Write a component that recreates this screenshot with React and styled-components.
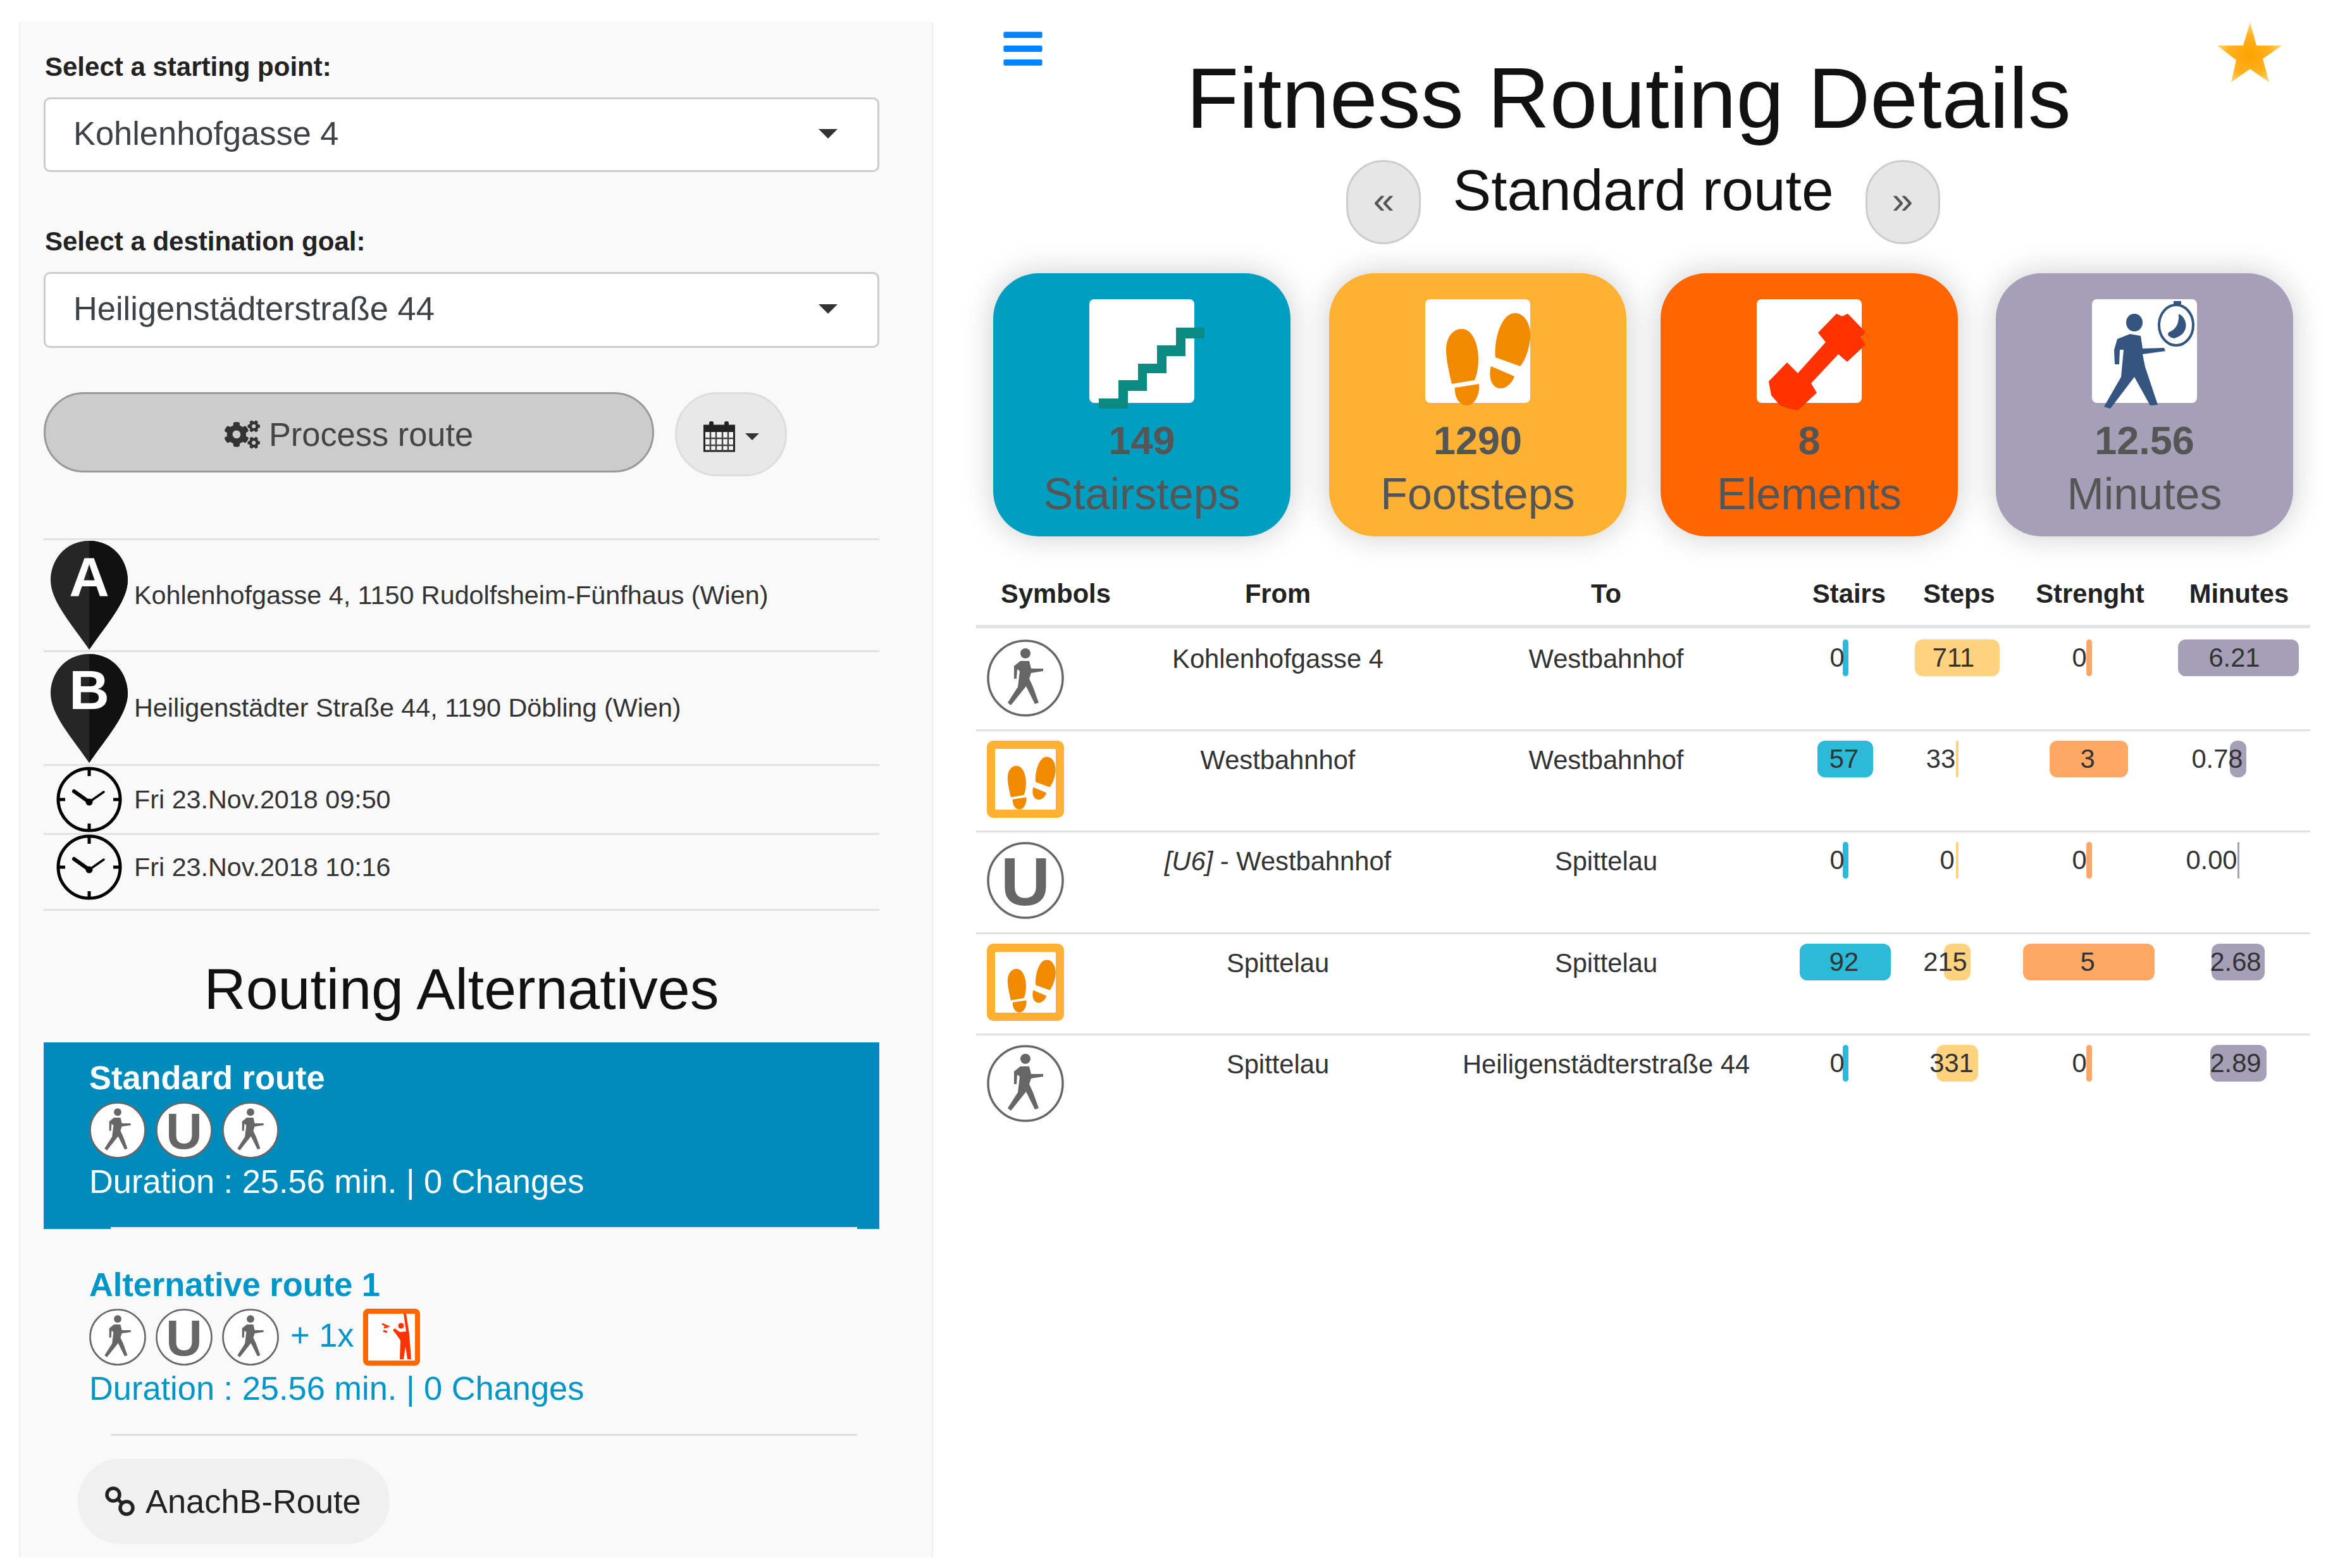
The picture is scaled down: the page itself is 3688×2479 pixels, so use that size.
import React from 'react'
import styled, { createGlobalStyle } from 'styled-components'
import { FaBars, FaCogs } from 'react-icons/fa'

const GlobalStyle = createGlobalStyle`
  html, body {
    margin: 0;
    background: #fff;
    font-family: "Liberation Sans", Arial, sans-serif;
    color: #333;
  }
`

const Page = styled.div`
  display: flex;
  align-items: flex-start;
  width: 3688px;
  height: 2479px;
  overflow: hidden;
`

const Sidebar = styled.aside`
  box-sizing: border-box;
  flex: none;
  width: 1445px;
  height: 2427px;
  margin: 35px 0 0 30px;
  padding: 46px 83px 0 37px;
  background: #f9f9f9;
  border-left: 2px solid #eee;
  border-right: 2px solid #eee;
`

const FieldLabel = styled.label`
  display: block;
  margin-top: ${p => p.$top}px;
  padding-left: 2px;
  font-size: 42px;
  font-weight: bold;
  line-height: 50px;
  color: #222;
`

const SelectBox = styled.div`
  box-sizing: border-box;
  display: flex;
  align-items: center;
  justify-content: space-between;
  height: ${p => p.$height}px;
  margin-top: 23px;
  padding: 0 63px 4px 44px;
  background: #fff;
  border: 3px solid #ccc;
  border-radius: 10px;
  font-size: 52.4px;
  color: #3c4248;
`

const Caret = styled.i`
  width: 0;
  height: 0;
  border-left: ${p => p.$size}px solid transparent;
  border-right: ${p => p.$size}px solid transparent;
  border-top: ${p => p.$size}px solid #333;
`

const ButtonRow = styled.div`
  display: flex;
  gap: 33px;
  margin-top: 70px;
`

const ProcessButton = styled.button`
  box-sizing: border-box;
  display: flex;
  align-items: center;
  justify-content: center;
  gap: 14px;
  width: 965px;
  height: 127px;
  padding-top: 8px;
  background: #ccc;
  border: 3px solid #999;
  border-radius: 64px;
  font-family: inherit;
  font-size: 52.4px;
  color: #444;
`

const CalendarButton = styled.button`
  box-sizing: border-box;
  display: flex;
  align-items: center;
  justify-content: center;
  gap: 16px;
  width: 177px;
  height: 133px;
  padding-top: 8px;
  background: #e8e8e8;
  border: 3px solid #ddd;
  border-radius: 67px;
  color: #333;
`

const SummaryList = styled.div`
  margin-top: 98px;
  border-bottom: 3px solid #e2e2e2;
`

const SummaryRow = styled.div`
  box-sizing: border-box;
  display: flex;
  align-items: center;
  height: ${p => p.$height}px;
  padding-bottom: ${p => p.$bottom || 0}px;
  border-top: 3px solid #e2e2e2;
  font-size: 41.3px;
  color: #333;
`

const IconSlot = styled.div`
  display: flex;
  justify-content: center;
  flex: none;
  width: 143px;
`

const SideTitle = styled.h3`
  margin: 68px 0 30px;
  font-size: 91.5px;
  font-weight: normal;
  line-height: 110px;
  text-align: center;
  color: #111;
`

const RouteItem = styled.div`
  position: relative;
  box-sizing: border-box;
  height: ${p => p.$height}px;
  padding: ${p => p.$top}px 0 0 72px;
  background: ${p => (p.$active ? '#008bbd' : 'transparent')};
  color: ${p => (p.$active ? '#fff' : '#0096c7')};

  &::after {
    content: '';
    position: absolute;
    left: 106px;
    right: 35px;
    bottom: 0;
    height: 3px;
    background: ${p => (p.$active ? '#f2f2f2' : '#ddd')};
  }
`

const RouteName = styled.div`
  font-size: 52.4px;
  font-weight: bold;
  line-height: 60px;
`

const RouteIcons = styled.div`
  display: flex;
  align-items: center;
  gap: 15px;
  height: 90px;
  margin-top: 8px;
`

const Extra = styled.span`
  margin: 0 0 6px 3px;
  font-size: 52.4px;
`

const RouteInfo = styled.div`
  margin-top: 6px;
  font-size: 52.4px;
  line-height: 60px;
`

const LinkButton = styled.button`
  display: flex;
  align-items: center;
  gap: 16px;
  width: 493px;
  height: 135px;
  margin: 36px 0 0 54px;
  padding: 0 0 0 43px;
  background: #f0f0f0;
  border: none;
  border-radius: 68px;
  font-family: inherit;
  font-size: 52.4px;
  color: #222;
`

const Main = styled.main`
  box-sizing: border-box;
  flex: 1;
  padding-right: 14px;
`

const Header = styled.header`
  display: grid;
  grid-template-columns: 1fr auto 1fr;
  padding-top: 35px;
`

const MenuIcon = styled(FaBars)`
  margin: 7px 0 0 107px;
  font-size: 70px;
  color: #0084ff;
`

const Star = styled.svg`
  justify-self: end;
  margin-right: 67px;
`

const Title = styled.h1`
  margin: 45px 0 0;
  font-size: 136px;
  font-weight: normal;
  line-height: 150px;
  color: #111;
`

const RouteNav = styled.div`
  display: flex;
  justify-content: center;
  gap: 50px;
  margin: 16px 0 0 46px;
  height: 140px;
`

const RoundButton = styled.button`
  box-sizing: border-box;
  width: 118px;
  height: 133px;
  margin-top: 7px;
  padding: 0 0 6px;
  background: #e6e6e6;
  border: 3px solid #ccc;
  border-radius: 60px;
  font-family: inherit;
  font-size: 60px;
  color: #555;
`

const RouteTitle = styled.h3`
  margin: 0;
  font-size: 91px;
  font-weight: normal;
  line-height: 110px;
  color: #111;
`

const Cards = styled.section`
  display: grid;
  grid-template-columns: 531px 524px 530px 467px;
  margin: 46px 0 0 95px;
`

const Card = styled.div`
  display: flex;
  flex-direction: column;
  align-items: center;
  box-sizing: border-box;
  width: 470px;
  height: 416px;
  padding-top: 41px;
  background: ${p => p.$color};
  border-radius: 72px;
  box-shadow: 0 0 50px rgba(0, 0, 0, 0.2);
  color: #555;
`

const CardTile = styled.div`
  width: 166px;
  height: 164px;
  background: #fff;
  border-radius: 8px;

  svg {
    display: block;
    overflow: visible;
  }
`

const CardValue = styled.div`
  margin-top: 21px;
  font-size: 63px;
  font-weight: bold;
  line-height: 76px;
`

const CardLabel = styled.div`
  margin-top: 5px;
  font-size: 70px;
  line-height: 84px;
`

const Table = styled.table`
  width: 2109px;
  margin: 42px 0 0 68px;
  border-collapse: collapse;
  table-layout: fixed;
  font-size: 41.7px;
  color: #333;
`

const HeadCell = styled.th`
  height: 98px;
  padding: 0;
  border-bottom: 5px solid #dee2e6;
  color: #222;
`

const Row = styled.tr`
  border-bottom: ${p => (p.$last ? 'none' : '3px solid #e2e2e2')};
`

const Cell = styled.td`
  box-sizing: border-box;
  height: ${p => p.$height}px;
  padding: ${p => p.$top}px ${p => p.$right || 0}px 0 0;
  line-height: 58px;
  text-align: center;
  vertical-align: top;
`

const SymbolCell = styled(Cell)`
  padding-left: 17px;
  text-align: left;
`

const Gauge = styled.div`
  display: grid;
  justify-items: center;
  align-items: center;
  height: 58px;
`

const GaugeBar = styled.div`
  grid-area: 1 / 1;
  width: ${p => p.$width}px;
  height: 58px;
  background: ${p => p.$color};
  border-radius: ${p => Math.min(12, p.$width / 2)}px;
`

const GaugeText = styled.span`
  grid-area: 1 / 1;
  position: relative;
  transform: translateX(${p => p.$shift}px);
`

const fontStack = '"Liberation Sans", Arial, sans-serif'

const Pin = ({ letter }) => (
  <svg width="122" height="172" viewBox="0 0 122 172">
    <path d="M61 0C100 0 122 32 122 62C122 95 90 130 61 172C32 130 0 95 0 62C0 32 22 0 61 0Z" fill="#262626" />
    <path d="M61 0C100 0 122 32 122 62C122 95 90 130 61 172Z" fill="#111" />
    <text x="61" y="87" textAnchor="middle" fontFamily={fontStack} fontWeight="bold" fontSize="88" fill="#fff">
      {letter}
    </text>
  </svg>
)

const ClockIcon = () => (
  <svg width="106" height="105" viewBox="0 0 106 105">
    <circle cx="53" cy="52" r="49" fill="none" stroke="#000" strokeWidth="5" />
    <path d="M53 4v11M53 90v11M4 52h11M91 52h11" stroke="#000" strokeWidth="5" />
    <path d="M29 39L53 56" fill="none" stroke="#000" strokeWidth="6" strokeLinecap="round" />
    <path d="M53 56L76 40" fill="none" stroke="#000" strokeWidth="3.5" strokeLinecap="round" />
    <circle cx="53" cy="56" r="5.5" fill="#000" />
  </svg>
)

const WalkerRing = ({ size }) => (
  <svg width={size} height={size} viewBox="0 0 122 122">
    <circle cx="61" cy="61" r="59" fill="#fff" stroke="#666" strokeWidth="3.5" />
    <circle cx="61" cy="22" r="8" fill="#666" />
    <path
      d="M53 34L67 34L70 46L89 46L89 50L70 53L67 62L73 75L82 100L76 102L62 74L38 104L33 100L49 75L52 50L48 47L47 62L43 62L43 42Z"
      fill="#666"
    />
  </svg>
)

const MetroRing = ({ size }) => (
  <svg width={size} height={size} viewBox="0 0 122 122">
    <circle cx="61" cy="61" r="59" fill="#fff" stroke="#666" strokeWidth="3.5" />
    <text x="61" y="100" textAnchor="middle" fontFamily={fontStack} fontWeight="bold" fontSize="108" fill="#666">
      U
    </text>
  </svg>
)

const FeetShapes = ({ color }) => (
  <g fill={color}>
    <path d="M58 47C74 47 84 70 84 95C84 112 80 124 78 128L42 134C38 118 33 95 33 80C33 60 44 47 58 47Z" />
    <path d="M47 140L85 134C87 150 78 168 66 168C54 168 46 155 47 140Z" />
    <path d="M142 22C158 22 168 42 166 62C164 82 156 100 150 106L111 92C108 70 118 22 142 22Z" />
    <path d="M104 106L141 122C138 132 128 142 118 141C106 140 99 125 104 106Z" />
  </g>
)

const FootTile = () => (
  <svg width="122" height="122" viewBox="0 0 122 122">
    <rect width="122" height="122" rx="10" fill="#ffb133" />
    <rect x="13" y="13" width="96" height="96" rx="2" fill="#fff" />
    <g transform="translate(14 13) scale(0.57)">
      <FeetShapes color="#f28a00" />
    </g>
  </svg>
)

const ClimberTile = () => (
  <svg width="90" height="90" viewBox="0 0 90 90">
    <rect x="4" y="4" width="82" height="82" rx="4" fill="#fff" stroke="#ff6600" strokeWidth="8" />
    <circle cx="60" cy="27" r="4.5" fill="#ff3300" />
    <path
      d="M64 8L68 8L73 40L76 80L70 80L67 60L64 80L58 80L59 50L52 40L47 34L50 31L58 37L68 36Z"
      fill="#ff3300"
    />
    <path d="M30 24L39 28L33 30M32 35L38 37" fill="none" stroke="#ff3300" strokeWidth="3" />
  </svg>
)

const CalendarIcon = () => (
  <svg width="50" height="50" viewBox="0 0 50 50">
    <rect x="1.5" y="8" width="47" height="40" fill="#f4f4f4" stroke="#222" strokeWidth="3" />
    <rect x="1.5" y="8" width="47" height="10" fill="#222" />
    <rect x="9" y="1" width="7" height="12" rx="3" fill="#222" />
    <rect x="33" y="1" width="7" height="12" rx="3" fill="#222" />
    <path d="M11 18V48M20 18V48M30 18V48M39 18V48M2 28H48M2 39H48" stroke="#444" strokeWidth="2.5" />
  </svg>
)

const LinkIcon = () => (
  <svg width="48" height="50" viewBox="0 0 48 50">
    <circle cx="13" cy="14" r="10" fill="none" stroke="#222" strokeWidth="5.5" />
    <circle cx="34" cy="35" r="10" fill="none" stroke="#222" strokeWidth="5.5" />
    <path d="M20 21L27 28" stroke="#222" strokeWidth="5.5" />
  </svg>
)

const StairIcon = () => (
  <svg width="166" height="164" viewBox="0 0 166 164">
    <path
      d="M137 45H182V62H152V90H122V117H91V145H61V173H15V157H46V128H77V102H107V73H137Z"
      fill="#0a8a80"
    />
  </svg>
)

const FeetIcon = () => (
  <svg width="166" height="164" viewBox="0 0 166 164">
    <FeetShapes color="#f28a00" />
  </svg>
)

const DumbbellIcon = () => (
  <svg width="166" height="164" viewBox="0 0 166 164">
    <path
      d="M126 23L135 27L144 23L172 52L165 60L172 72L143 99L129 87L86 133L95 148L65 176L51 173L37 168L23 152L19 130L48 100L65 117L109 68L97 53Z"
      fill="#ff3300"
    />
  </svg>
)

const TimerIcon = () => (
  <svg width="166" height="164" viewBox="0 0 166 164">
    <g fill="#33557f">
      <ellipse cx="67" cy="37" rx="13" ry="14" />
      <path d="M60 55L77 58L80 78L114 77L116 82L80 87L84 107L104 167L92 168L67 123L29 173L19 170L46 123L50 80L44 80L43 103L36 103L35 80L40 63Z" />
      <path d="M137 23C152 30 155 55 130 62C120 60 118 55 122 52C133 48 138 38 137 23Z" />
      <rect x="129" y="3" width="12" height="5" />
    </g>
    <ellipse cx="133" cy="41" rx="27" ry="32" fill="none" stroke="#33557f" strokeWidth="4" />
  </svg>
)

const cards = [
  { color: '#009fc2', value: '149', label: 'Stairsteps', icon: <StairIcon /> },
  { color: '#ffb133', value: '1290', label: 'Footsteps', icon: <FeetIcon /> },
  { color: '#ff6600', value: '8', label: 'Elements', icon: <DumbbellIcon /> },
  { color: '#a59fb7', value: '12.56', label: 'Minutes', icon: <TimerIcon /> },
]

const columns = [
  { title: 'Symbols', width: 252 },
  { title: 'From', width: 450 },
  { title: 'To', width: 588 },
  { title: 'Stairs', width: 180 },
  { title: 'Steps', width: 168 },
  { title: 'Strenght', width: 246 },
  { title: 'Minutes', width: 225 },
]

const gaugeColumns = [
  { key: 'stairs', color: '#2bbbd8', right: 12 },
  { key: 'steps', color: '#ffd27f', right: 6 },
  { key: 'strength', color: '#ffa866', right: 4 },
  { key: 'minutes', color: '#a59fb7', right: 3 },
]

const legs = [
  {
    icon: <WalkerRing size={122} />,
    from: 'Kohlenhofgasse 4',
    to: 'Westbahnhof',
    stairs: ['0', 9, -13],
    steps: ['711', 134, -6],
    strength: ['0', 9, -15],
    minutes: ['6.21', 191, -6],
  },
  {
    icon: <FootTile />,
    from: 'Westbahnhof',
    to: 'Westbahnhof',
    stairs: ['57', 88, -2],
    steps: ['33', 4, -26],
    strength: ['3', 124, -2],
    minutes: ['0.78', 26, -33],
  },
  {
    icon: <MetroRing size={122} />,
    from: (
      <>
        <em>[U6]</em> - Westbahnhof
      </>
    ),
    to: 'Spittelau',
    stairs: ['0', 9, -13],
    steps: ['0', 4, -16],
    strength: ['0', 9, -15],
    minutes: ['0.00', 3, -42],
  },
  {
    icon: <FootTile />,
    from: 'Spittelau',
    to: 'Spittelau',
    stairs: ['92', 144, -2],
    steps: ['215', 42, -19],
    strength: ['5', 208, -2],
    minutes: ['2.68', 84, -4],
  },
  {
    icon: <WalkerRing size={122} />,
    from: 'Spittelau',
    to: 'Heiligenstädterstraße 44',
    stairs: ['0', 9, -13],
    steps: ['331', 66, -9],
    strength: ['0', 9, -15],
    minutes: ['2.89', 89, -4],
  },
]

export default function App() {
  return (
    <Page>
      <GlobalStyle />
      <Sidebar>
        <FieldLabel $top={0}>Select a starting point:</FieldLabel>
        <SelectBox $height={118}>
          Kohlenhofgasse 4
          <Caret $size={15} />
        </SelectBox>
        <FieldLabel $top={85}>Select a destination goal:</FieldLabel>
        <SelectBox $height={120}>
          Heiligenstädterstraße 44
          <Caret $size={15} />
        </SelectBox>
        <ButtonRow>
          <ProcessButton>
            <FaCogs size={56} color="#333" />
            Process route
          </ProcessButton>
          <CalendarButton>
            <CalendarIcon />
            <Caret $size={11} />
          </CalendarButton>
        </ButtonRow>

        <SummaryList>
          <SummaryRow $height={177}>
            <IconSlot>
              <Pin letter="A" />
            </IconSlot>
            Kohlenhofgasse 4, 1150 Rudolfsheim-Fünfhaus (Wien)
          </SummaryRow>
          <SummaryRow $height={180}>
            <IconSlot>
              <Pin letter="B" />
            </IconSlot>
            Heiligenstädter Straße 44, 1190 Döbling (Wien)
          </SummaryRow>
          <SummaryRow $height={109}>
            <IconSlot>
              <ClockIcon />
            </IconSlot>
            Fri 23.Nov.2018 09:50
          </SummaryRow>
          <SummaryRow $height={120} $bottom={14}>
            <IconSlot>
              <ClockIcon />
            </IconSlot>
            Fri 23.Nov.2018 10:16
          </SummaryRow>
        </SummaryList>

        <SideTitle>Routing Alternatives</SideTitle>

        <RouteItem $active $height={295} $top={26}>
          <RouteName>Standard route</RouteName>
          <RouteIcons>
            <WalkerRing size={90} />
            <MetroRing size={90} />
            <WalkerRing size={90} />
          </RouteIcons>
          <RouteInfo>Duration : 25.56 min. | 0 Changes</RouteInfo>
        </RouteItem>
        <RouteItem $height={327} $top={58}>
          <RouteName>Alternative route 1</RouteName>
          <RouteIcons>
            <WalkerRing size={90} />
            <MetroRing size={90} />
            <WalkerRing size={90} />
            <Extra>+ 1x</Extra>
            <ClimberTile />
          </RouteIcons>
          <RouteInfo>Duration : 25.56 min. | 0 Changes</RouteInfo>
        </RouteItem>

        <LinkButton>
          <LinkIcon />
          AnachB-Route
        </LinkButton>
      </Sidebar>

      <Main>
        <Header>
          <div>
            <MenuIcon />
          </div>
          <Title>Fitness Routing Details</Title>
          <Star width="102" height="95" viewBox="0 0 102 95">
            <defs>
              <radialGradient id="starFill" cx="0.5" cy="0.55" r="0.55">
                <stop offset="0" stopColor="#ffa200" />
                <stop offset="0.6" stopColor="#ffb21e" />
                <stop offset="1" stopColor="#ffdc80" />
              </radialGradient>
            </defs>
            <polygon points="52,0 62,37 102,37 72,58 82,95 52,74 22,95 30,60 0,37 41,37" fill="url(#starFill)" />
          </Star>
        </Header>

        <RouteNav>
          <RoundButton>«</RoundButton>
          <RouteTitle>Standard route</RouteTitle>
          <RoundButton>»</RoundButton>
        </RouteNav>

        <Cards>
          {cards.map(card => (
            <Card key={card.label} $color={card.color}>
              <CardTile>{card.icon}</CardTile>
              <CardValue>{card.value}</CardValue>
              <CardLabel>{card.label}</CardLabel>
            </Card>
          ))}
        </Cards>

        <Table>
          <colgroup>
            {columns.map(col => (
              <col key={col.title} width={col.width} />
            ))}
          </colgroup>
          <thead>
            <tr>
              {columns.map(col => (
                <HeadCell key={col.title}>{col.title}</HeadCell>
              ))}
            </tr>
          </thead>
          <tbody>
            {legs.map((leg, i) => {
              // first row sits a little lower than the rest
              const height = i === 0 ? 163.5 : 160.5
              const top = i === 0 ? 18 : 15
              return (
                <Row key={i} $last={i === legs.length - 1}>
                  <SymbolCell $height={height} $top={top}>
                    {leg.icon}
                  </SymbolCell>
                  <Cell $height={height} $top={top + 2}>
                    {leg.from}
                  </Cell>
                  <Cell $height={height} $top={top + 2}>
                    {leg.to}
                  </Cell>
                  {gaugeColumns.map(col => {
                    const [text, width, shift] = leg[col.key]
                    return (
                      <Cell key={col.key} $height={height} $top={top} $right={col.right}>
                        <Gauge>
                          <GaugeBar $width={width} $color={col.color} />
                          <GaugeText $shift={shift}>{text}</GaugeText>
                        </Gauge>
                      </Cell>
                    )
                  })}
                </Row>
              )
            })}
          </tbody>
        </Table>
      </Main>
    </Page>
  )
}
